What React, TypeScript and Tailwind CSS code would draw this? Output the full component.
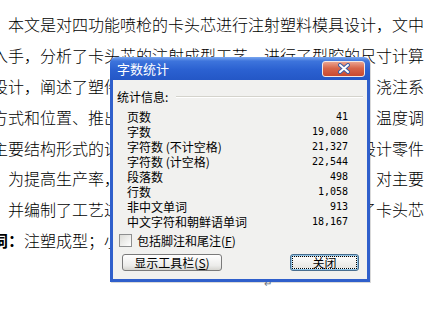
import React from "react";

const cjk = { fontFamily: '"Noto Sans CJK SC", "Noto Sans", sans-serif' };
const mono = { fontFamily: '"DejaVu Sans Mono", "Liberation Mono", monospace' };

const docLines: { indent: boolean; content: React.ReactNode }[] = [
  { indent: true, content: "本文是对四功能喷枪的卡头芯进行注射塑料模具设计，文中从塑件" },
  { indent: false, content: "入手，分析了卡头芯的注射成型工艺，进行了型腔的尺寸计算" },
  { indent: false, content: "设计，阐述了塑件分型面的选择、型腔的数目与排布、浇注系统" },
  { indent: false, content: "方式和位置、推出机构的设计与校核，模具冷却系统、温度调节" },
  { indent: false, content: "主要结构形式的设计，并对模具的主要零部件进行了设计零件的" },
  { indent: true, content: "为提高生产率，设计了一模四腔的热流道模具结构、对主要零件" },
  { indent: true, content: "并编制了工艺过程卡片，绘制了模具装配图，完成了卡头芯的" },
  {
    indent: false,
    content: (
      <>
        <span className="font-bold">词：</span>注塑成型；小型模具；卡头芯；热流道
      </>
    ),
  },
];

const stats: [string, string][] = [
  ["页数", "41"],
  ["字数", "19,080"],
  ["字符数 (不计空格)", "21,327"],
  ["字符数 (计空格)", "22,544"],
  ["段落数", "498"],
  ["行数", "1,058"],
  ["非中文单词", "913"],
  ["中文字符和朝鲜语单词", "18,167"],
];

function CloseX() {
  return (
    <svg width="14" height="11" viewBox="0 0 14 11">
      <path d="M3 2 L11 9 M11 2 L3 9" stroke="#3b5fa8" strokeWidth="4" strokeLinecap="round" fill="none" />
      <path d="M3 2 L11 9 M11 2 L3 9" stroke="#ffffff" strokeWidth="2" strokeLinecap="round" fill="none" />
    </svg>
  );
}

export default function App() {
  return (
    <div className="relative w-[424px] h-[316px] overflow-hidden bg-white text-black" style={cjk}>
      <div className="pt-[9px] text-[16px] font-light">
        {docLines.map((l, i) => (
          <div
            key={i}
            className={`h-[30.9px] leading-[30.9px] whitespace-nowrap ${l.indent ? "ml-2" : "-ml-2"}`}
          >
            {l.content}
          </div>
        ))}
        <div className="mt-[20px] h-[14px] leading-[14px] pl-[264px] text-[10px] text-gray-500">↵</div>
      </div>

      <div className="absolute left-[110px] top-[57px] w-[260px] h-[225px] flex flex-col rounded-t-[6px] overflow-hidden shadow-[1px_1px_0_rgba(0,0,0,0.15)]">
        <div className="h-[23px] flex items-center justify-between pl-[7px] pr-[5px] bg-[linear-gradient(to_bottom,#79a6ef_0%,#3d74dc_18%,#2b61d1_55%,#2457c6_100%)]">
          <span className="text-white text-[13px] leading-none">字数统计</span>
          <div className="w-[43px] h-[16px] rounded-[3px] border border-[#f4e8e4] flex items-center justify-center bg-[linear-gradient(to_bottom,#eba38f_0%,#d8664a_45%,#c9492f_100%)]">
            <CloseX />
          </div>
        </div>
        <div className="flex-1 flex flex-col border-x-[3px] border-b-[3px] border-[#2f5fcb] bg-[#f1f1ef] text-[12px] leading-[15px]">
          <div className="flex items-center pl-[4px] pr-[4px] pt-[9px]">
            <span className="shrink-0">统计信息:</span>
            <div className="flex-1 ml-[8px] h-[2px] border-t border-[#d4d3cc] border-b border-b-white" />
          </div>
          <div className="mt-[5px] pl-[14px] pr-[19px] flex flex-col">
            {stats.map(([k, v]) => (
              <div key={k} className="h-[15px] flex items-center justify-between">
                <span>{k}</span>
                <span className="text-[10px]" style={mono}>{v}</span>
              </div>
            ))}
          </div>
          <div className="mt-[5px] pl-[6px] h-[13px] flex items-center gap-[5px]">
            <div className="w-[13px] h-[13px] border border-[#8e8f8f] bg-[linear-gradient(135deg,#dcdcd7,#ffffff)]" />
            <span>
              包括脚注和尾注(<span className="underline">F</span>)
            </span>
          </div>
          <div className="mt-[7px] pl-[9px] pr-[8px] flex justify-between">
            <div className="w-[100px] h-[17px] rounded-[3px] border border-[#7a7a7a] flex items-center justify-center bg-[linear-gradient(to_bottom,#ffffff,#ececea_70%,#d6d5d0)]">
              显示工具栏(<span className="underline">S</span>)
            </div>
            <div className="w-[69px] h-[17px] rounded-[3px] border border-[#4a6e8e] p-[1px] bg-[#8fc3e6]">
              <div className="w-full h-full flex items-center justify-center border border-dotted border-black bg-[linear-gradient(to_bottom,#fbfbfa,#e7e6e2)]">
                关闭
              </div>
            </div>
          </div>
        </div>
      </div>
    </div>
  );
}
